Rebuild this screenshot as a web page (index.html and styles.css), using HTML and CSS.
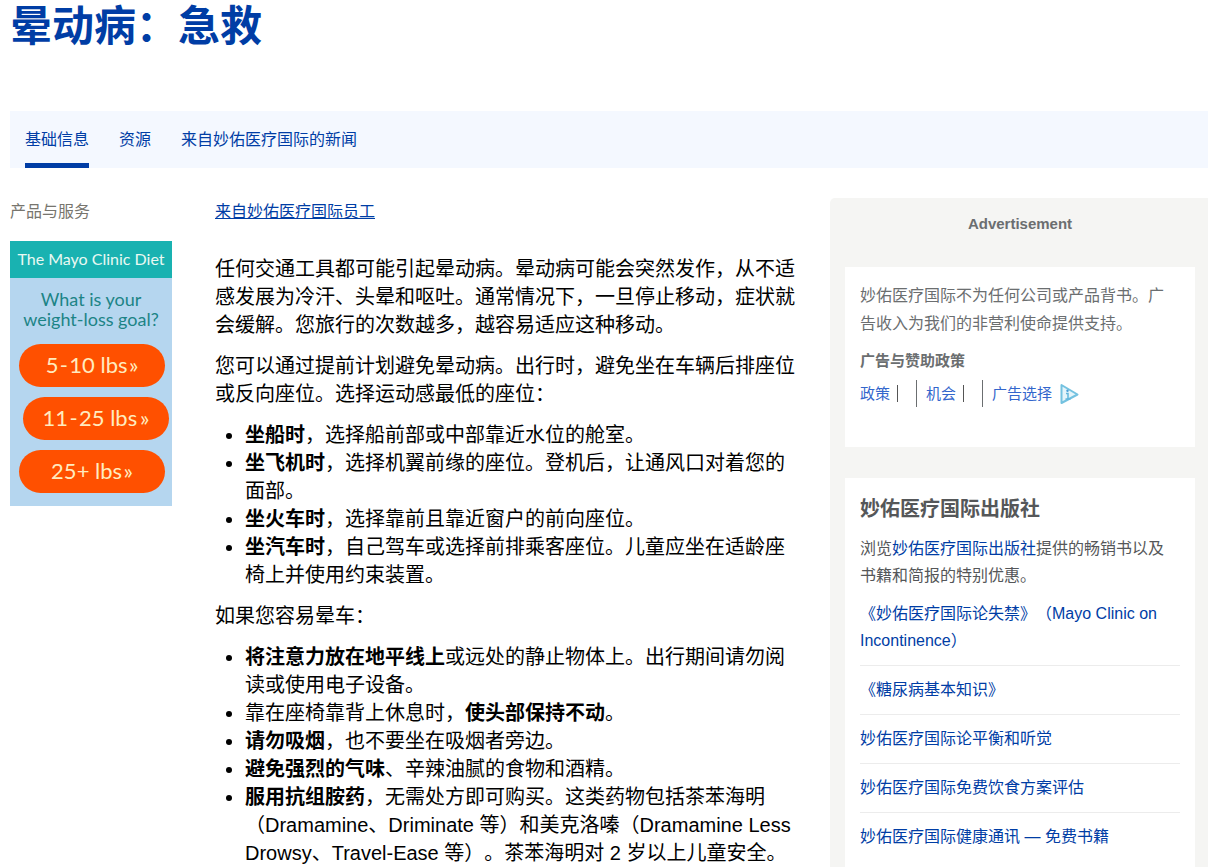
FILE: index.html
```html
<!DOCTYPE html>
<html lang="zh-CN">
<head>
<meta charset="utf-8">
<meta name="viewport" content="width=device-width, initial-scale=1">
<title>晕动病：急救</title>
<link rel="stylesheet" href="styles.css">
</head>
<body>
<div class="page">
  <h1 class="title">晕动病：急救</h1>

  <nav class="tabs">
    <a class="tab tab-active" href="#basics" aria-current="page">基础信息</a>
    <a class="tab" href="#resources">资源</a>
    <a class="tab" href="#news">来自妙佑医疗国际的新闻</a>
  </nav>

  <div class="columns">
    <aside class="services">
      <p class="services-label">产品与服务</p>
      <div class="diet">
        <div class="diet-head">The Mayo Clinic Diet</div>
        <p class="diet-question">What is your<br>weight-loss goal?</p>
        <div class="diet-goals">
          <a class="goal" href="#goal-10">5&#8202;-&#8202;10 lbs&#8202;»</a>
          <a class="goal goal-shifted" href="#goal-25">11&#8202;-&#8202;25 lbs&#8201;»</a>
          <a class="goal" href="#goal-more">25+ lbs&#8202;»</a>
        </div>
      </div>
    </aside>

    <main class="article" id="basics">
      <a class="byline" href="#staff">来自妙佑医疗国际员工</a>
      <p>任何交通工具都可能引起晕动病。晕动病可能会突然发作，从不适感发展为冷汗、头晕和呕吐。通常情况下，一旦停止移动，症状就会缓解。您旅行的次数越多，越容易适应这种移动。</p>
      <p>您可以通过提前计划避免晕动病。出行时，避免坐在车辆后排座位或反向座位。选择运动感最低的座位：</p>
      <ul>
        <li><strong>坐船时</strong>，选择船前部或中部靠近水位的舱室。</li>
        <li><strong>坐飞机时</strong>，选择机翼前缘的座位。登机后，让通风口对着您的面部。</li>
        <li><strong>坐火车时</strong>，选择靠前且靠近窗户的前向座位。</li>
        <li><strong>坐汽车时</strong>，自己驾车或选择前排乘客座位。儿童应坐在适龄座椅上并使用约束装置。</li>
      </ul>
      <p>如果您容易晕车：</p>
      <ul>
        <li><strong>将注意力放在地平线上</strong>或远处的静止物体上。出行期间请勿阅读或使用电子设备。</li>
        <li>靠在座椅靠背上休息时，<strong>使头部保持不动</strong>。</li>
        <li><strong>请勿吸烟</strong>，也不要坐在吸烟者旁边。</li>
        <li><strong>避免强烈的气味</strong>、辛辣油腻的食物和酒精。</li>
        <li><strong>服用抗组胺药</strong>，无需处方即可购买。这类药物包括茶苯海明（Dramamine、Driminate 等）和美克洛嗪（Dramamine Less Drowsy、Travel-Ease 等）。茶苯海明对 2 岁以上儿童安全。</li>
      </ul>
    </main>

    <aside class="panel">
      <p class="panel-label">Advertisement</p>
      <section class="card policy">
        <p class="policy-text">妙佑医疗国际不为任何公司或产品背书。广告收入为我们的非营利使命提供支持。</p>
        <h2 class="policy-title">广告与赞助政策</h2>
        <ul class="policy-links">
          <li><a href="#policy">政策</a><span class="bar"></span></li>
          <li><a href="#opportunity">机会</a><span class="bar"></span></li>
          <li><a href="#adchoices">广告选择</a>
            <svg class="adchoices" viewBox="0 0 19 22" aria-hidden="true">
              <path d="M1.500 2v18L17.500 11.500z" fill="#e4f4fa" stroke="#74c2e0" stroke-width="2" stroke-linejoin="round"/>
              <path d="M6 10.500h2v5.500M5.500 16h5" fill="none" stroke="#62b6dc" stroke-width="1.500"/>
              <circle cx="7.500" cy="7.800" r="1.200" fill="#4a9ed6"/>
            </svg>
          </li>
        </ul>
      </section>
      <section class="card press">
        <h2 class="press-title">妙佑医疗国际出版社</h2>
        <p class="press-text">浏览<a href="#press">妙佑医疗国际出版社</a>提供的畅销书以及书籍和简报的特别优惠。</p>
        <ul class="books">
          <li><a href="#book-1">《妙佑医疗国际论失禁》（Mayo Clinic on Incontinence）</a></li>
          <li><a href="#book-2">《糖尿病基本知识》</a></li>
          <li><a href="#book-3">妙佑医疗国际论平衡和听觉</a></li>
          <li><a href="#book-4">妙佑医疗国际免费饮食方案评估</a></li>
          <li><a href="#book-5">妙佑医疗国际健康通讯 — 免费书籍</a></li>
        </ul>
      </section>
    </aside>
  </div>
</div>
</body>
</html>
```
FILE: styles.css
```css
* {
  box-sizing: border-box;
}

body {
  margin: 0;
  background: #fff;
  color: #000;
  font-family: "Liberation Sans", "Noto Sans CJK SC", sans-serif;
  font-size: 16px;
  line-height: 27px;
  text-spacing-trim: space-all;
}

h1, h2, p, ul {
  margin: 0;
}

ul {
  padding: 0;
}

a {
  color: #003da5;
  text-decoration: none;
}

.page {
  padding-left: 10px;
}

.title {
  color: #003da5;
  font-size: 42px;
  line-height: 53px;
  margin-bottom: 58px;
}

.tabs {
  display: flex;
  gap: 30px;
  padding: 0 15px;
  background: #f4f8ff;
}

.tab {
  padding: 15px 0 10px;
  border-bottom: 5px solid transparent;
}

.tab-active {
  border-bottom-color: #003da5;
}

.columns {
  display: grid;
  grid-template-columns: 175px 1fr 378px;
  column-gap: 30px;
  padding-top: 30px;
}

.services-label {
  color: #77756e;
  margin-bottom: 16px;
}

.diet {
  width: 162px;
  padding-bottom: 13px;
  background: #b5d6ef;
  font-family: Lato, sans-serif;
}

.diet-head {
  padding-bottom: 2px;
  background: #19b2b1;
  color: #e9f9f3;
  font-size: 16px;
  line-height: 35px;
  text-align: center;
}

.diet-question {
  padding: 11px 0 15px;
  color: #1c8486;
  font-size: 18px;
  line-height: 20px;
  text-align: center;
  white-space: nowrap;
}

.diet-goals {
  display: flex;
  flex-direction: column;
  gap: 10px;
  padding: 0 3px 0 9px;
}

.goal {
  width: 146px;
  padding-bottom: 2px;
  border-radius: 22px;
  background: #ff5000;
  color: #ffebbf;
  font-size: 22px;
  line-height: 41px;
  text-align: center;
}

.goal-shifted {
  align-self: flex-end;
}

.article {
  font-size: 20px;
  line-height: 28px;
  padding-bottom: 15px;
}

.byline {
  display: block;
  width: fit-content;
  font-size: 16px;
  line-height: 27px;
  text-decoration: underline;
  margin-bottom: 30px;
}

.article p,
.article ul {
  margin-bottom: 13px;
}

.article ul {
  padding-left: 30px;
}

.panel {
  display: flex;
  flex-direction: column;
  padding: 0 13px 0 15px;
  border-top-left-radius: 5px;
  background: #f5f5f3;
}

.panel-label {
  padding: 12px 0 30px;
  color: #6b6e70;
  font-size: 15px;
  font-weight: bold;
  text-align: center;
}

.card {
  padding: 15px;
  background: #fff;
}

.policy {
  color: #6b6e70;
  margin-bottom: 31px;
  padding-bottom: 40px;
}

.policy-text,
.press-text {
  padding-right: 8px;
}

.policy-text {
  line-height: 28px;
  margin-bottom: 9px;
}

.policy-title {
  font-size: 15px;
  line-height: 27px;
  margin-bottom: 6px;
}

.policy-links {
  display: flex;
  list-style: none;
  font-size: 15px;
}

.policy-links a {
  color: #3366cc;
}

.policy-links li {
  display: flex;
  align-items: center;
}

.policy-links li + li {
  margin-left: 18px;
  padding-left: 9px;
  border-left: 1px solid #6b6e70;
}

.bar {
  height: 17px;
  margin-left: 7px;
  border-left: 1px solid #555;
}

.adchoices {
  width: 19px;
  height: 22px;
  margin-left: 8px;
}

.press {
  flex: 1;
  color: #555759;
}

.press-title {
  font-size: 20px;
  line-height: 32px;
  margin-bottom: 10px;
}

.press-text {
  margin-bottom: 11px;
}

.books {
  list-style: none;
}

.books li {
  padding-bottom: 11px;
  margin-bottom: 10px;
  border-bottom: 1px solid #ececec;
}

.books li:last-child {
  margin-bottom: 0;
  border-bottom: 0;
}
```
